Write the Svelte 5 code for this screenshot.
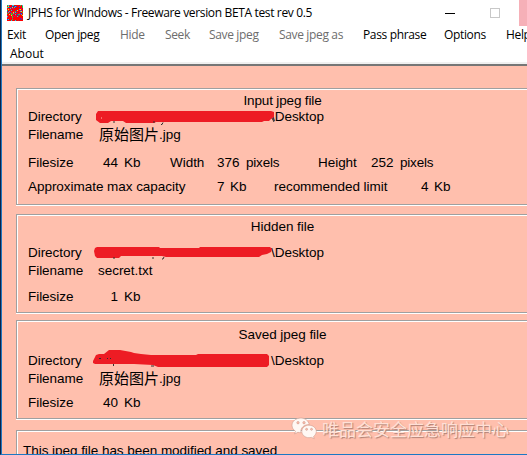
<script>
  const menu = [
    { label: 'Exit', w: 38 },
    { label: 'Open jpeg', w: 75 },
    { label: 'Hide', w: 45, off: true },
    { label: 'Seek', w: 44, off: true },
    { label: 'Save jpeg', w: 70, off: true },
    { label: 'Save jpeg as', w: 84, off: true },
    { label: 'Pass phrase', w: 81 },
    { label: 'Options', w: 62 },
    { label: 'Help', w: 30 }
  ];
  const colours = ['#f00', '#e8101c', '#f00', '#20d040', '#f00', '#2438d8', '#f00', '#f4e020', '#e00060', '#f00', '#20c8e0', '#f00', '#f00', '#c01020'];
  let seed = 41;
  const pixels = Array.from({ length: 256 }, (_, i) => {
    seed = (seed * 16807) % 2147483647;
    return { x: i % 16, y: Math.floor(i / 16), c: colours[(seed >> 8) % 14] };
  });
</script>

<div class="window">
  <header class="titlebar">
    <svg class="logo" width="16" height="16" viewBox="0 0 16 16" shape-rendering="crispEdges">
      {#each pixels as p}<rect x={p.x} y={p.y} width="1" height="1" fill={p.c} />{/each}
    </svg>
    <span class="caption">JPHS for WIndows - Freeware version BETA test rev 0.5</span>
    <i class="min"></i><i class="max"></i><i class="close"></i>
  </header>
  <nav>
    {#each menu as m}<span class:off={m.off} style:width="{m.w}px">{m.label}</span>{/each}
    <span class="about">About</span>
  </nav>
  <main>
    <section class="input">
      <h2>Input jpeg file</h2>
      <div class="row"><span class="label">Directory</span><span class="dir">\Desktop</span></div>
      <div class="row file"><span class="label">Filename</span><span class="cjk">原始图片</span><span>.jpg</span></div>
      <div class="row size">
        <span class="label">Filesize</span><span class="num">44</span><span class="kb">Kb</span>
        <span class="dim">Width</span><span class="px">376</span><span class="unit">pixels</span>
        <span class="dim tall">Height</span><span class="px">252</span><span>pixels</span>
      </div>
      <div class="row cap"><span class="approx">Approximate max capacity</span><span class="seven">7</span><span class="kb">Kb</span><span class="limit">recommended limit</span><span class="four">4</span><span>Kb</span></div>
      <svg class="ink" width="190" height="20" viewBox="92 107 190 20">
        <path d="M98 111H271L274 112V117L271 119L269 121H264L262 122H156L154 123H126L123 121H111L108 123H100L96 120V114L98 111Z" fill="#ed1c24" />
        <path d="M113 122h2M153 122h2M163 122.5l-1 2h-1M272 118l2 4" stroke="#303030" fill="none" /><path d="M101 118h1" stroke="#ffbfad" />
      </svg>
    </section>
    <section class="hidden">
      <h2>Hidden file</h2>
      <div class="row"><span class="label">Directory</span><span class="dir">\Desktop</span></div>
      <div class="row file"><span class="label">Filename</span><span>secret.txt</span></div>
      <div class="row size"><span class="label">Filesize</span><span class="num">1</span><span>Kb</span></div>
      <svg class="ink" width="190" height="20" viewBox="92 243 190 20">
        <path d="M95 248L97 247H159L160 248H199L200 247H270L272 249L271 252L267 254L262 255L259 257H166L162 256H121L119 258H97L95 256L94 251Z" fill="#ed1c24" />
        <path d="M113 258h2M153 257v2M164 257l-1 2h-1" stroke="#303030" fill="none" />
      </svg>
    </section>
    <section class="saved">
      <h2>Saved jpeg file</h2>
      <div class="row"><span class="label">Directory</span><span class="dir">\Desktop</span></div>
      <div class="row file"><span class="label">Filename</span><span class="cjk">原始图片</span><span>.jpg</span></div>
      <div class="row size"><span class="label">Filesize</span><span class="num">40</span><span>Kb</span></div>
      <svg class="ink" width="190" height="24" viewBox="92 348 190 24">
        <path d="M93 361L96 355L99 354H104L109 350H120L131 352L134 353L141 354L151 355H196L198 354H267L269 356V365L267 367H158L153 365L134 364H95L93 363Z" fill="#ed1c24" />
        <path d="M99 358.5h2M107 358.5h1M110 358.5h1M113.500 364v2M151 366h3" stroke="#303030" fill="none" />
      </svg>
    </section>
    <section class="status"><div class="row">This jpeg file has been modified and saved</div></section>
  </main>
  <div class="watermark">
    <svg width="26" height="23" viewBox="0 0 26 23">
      <path fill="#fff8f4" stroke="#cf9a8c" stroke-width=".6" fill-rule="evenodd" d="M10 1C4.800 1 1 4.300 1 8.300c0 2.500 1.300 4.500 3.500 6L3.600 17l3.300-1.700c1 .3 2 .4 3 .4C9.200 10.800 13 7.500 18.300 7.500 17.500 3.800 14 1 10 1ZM7 4.500a1.200 1.200 0 1 1 0 2.400 1.200 1.200 0 0 1 0-2.400ZM13 4.500a1.200 1.200 0 1 1 0 2.400 1.200 1.200 0 0 1 0-2.400Z" />
      <path fill="#fff8f4" stroke="#cf9a8c" stroke-width=".6" fill-rule="evenodd" d="M18 8.200c4 0 7.300 2.800 7.300 6.200 0 2-1 3.800-2.700 5l.6 2.300-2.600-1.300c-.8.200-1.700.3-2.600.3-4 0-7.200-2.800-7.200-6.300s3.200-6.200 7.200-6.200ZM15.600 11.300a1 1 0 1 0 0 2 1 1 0 0 0 0-2ZM20.500 11.300a1 1 0 1 0 0 2 1 1 0 0 0 0-2Z" />
    </svg>
    <span>唯品会安全应急响应中心</span>
  </div>
</div>

<style>
  .window {
    position: relative;
    box-sizing: border-box;
    width: 527px;
    height: 455px;
    overflow: hidden;
    display: flex;
    flex-direction: column;
    background: #fff;
    border-left: 1px solid #0b2347;
    border-bottom: 1px solid #1c78c4;
    box-shadow: inset 1px 0 #2277bd;
    font-family: "Liberation Sans", Arial, sans-serif;
    color: #000;
    white-space: nowrap;
  }
  .titlebar { display: flex; height: 25px; flex: none; padding-left: 6px; font: 12px/26px "Open Sans", "Noto Sans", sans-serif; }
  .logo { margin: 5px 5px 0 0; flex: none; }
  .caption { width: 417px; flex: none; letter-spacing: -.35px; }
  .min { width: 10px; height: 1px; margin-top: 13px; background: #000; flex: none; }
  .max { box-sizing: border-box; width: 10px; height: 10px; margin: 8px 0 0 35px; border: 1px solid #c8c8c8; flex: none; }
  .close { width: 10px; height: 26px; margin-left: 19px; background: #f6b0b8; flex: none; }
  nav { height: 39px; flex: none; display: flex; flex-wrap: wrap; align-content: flex-start; width: 540px; padding-left: 6px; font: 12px/19px "Open Sans", "Noto Sans", sans-serif; letter-spacing: -.35px; }
  nav span { flex: none; }
  .off { color: #6d6d6d; }
  .about { margin-left: 3px; letter-spacing: 0; }
  main { margin-left: 1px; flex: 1; box-sizing: border-box; min-height: 0; width: 547px; padding: 22px 0 0 14px; background: #ffbfad; border-top: 2px solid #767676; box-shadow: 0 -2px #f0f0f0; }
  section { position: relative; box-sizing: border-box; border: 1px solid #a0a0a0; box-shadow: inset 1px 1px #fff, 0 1px #fff; padding-left: 11px; font-size: 13.5px; line-height: 16px; letter-spacing: -.04px; }
  .input { height: 117px; padding-top: 4px; margin-bottom: 9px; }
  .hidden { height: 99px; padding-top: 4px; margin-bottom: 7px; }
  .saved { height: 99px; padding-top: 6px; margin-bottom: 11px; }
  .status { height: 60px; padding: 12px 0 0 6px; }
  h2 { margin: 0 0 0 -11px; font: inherit; text-align: center; }
  .input h2 { letter-spacing: -.15px; }
  .hidden h2, .saved h2 { margin-bottom: 10px; }
  .row { display: flex; height: 16px; }
  .row span { flex: none; }
  .file { margin-top: 2px; }
  .input .size { margin-top: 12px; }
  .hidden .size { margin-top: 10px; }
  .saved .size { margin-top: 8px; }
  .cap { margin-top: 8px; }
  .label { width: 70px; }
  .dir { margin-left: 173px; }
  .cjk { width: 61px; padding-left: 1px; box-sizing: border-box; font: 15px/14px "Noto Sans CJK SC", sans-serif; letter-spacing: 0; }
  .num { width: 20px; text-align: right; margin-right: 6px; }
  .kb { width: 46px; }
  .dim { width: 47px; }
  .tall { width: 53px; }
  .px { width: 29px; }
  .unit { width: 72px; letter-spacing: -.2px; }
  .unit ~ span:last-child { letter-spacing: -.2px; }
  .approx { width: 189px; }
  .seven { width: 13px; }
  .cap .kb { width: 44px; }
  .limit { width: 147px; }
  .four { width: 13px; }
  .ink { position: absolute; left: 75px; top: 18px; }
  .hidden .ink { top: 28px; }
  .saved .ink { top: 27px; }
  .watermark { position: absolute; left: 290px; top: 417px; display: flex; align-items: center; height: 23px; color: #ffe0d6; font: 17px/23px "Noto Sans CJK SC", sans-serif; text-shadow: 1px 1px 1px #ae8075; }
  .watermark span { margin-left: 5px; }
</style>
